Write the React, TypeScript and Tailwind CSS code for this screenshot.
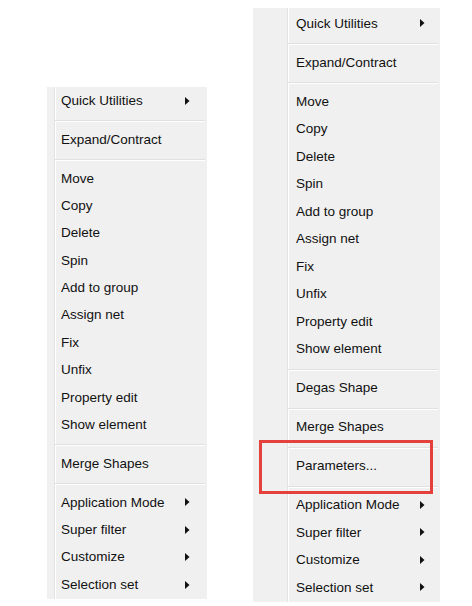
type Entry = { label: string; sub?: boolean } | "sep";

const leftItems: Entry[] = [
  { label: "Quick Utilities", sub: true },
  "sep",
  { label: "Expand/Contract" },
  "sep",
  { label: "Move" },
  { label: "Copy" },
  { label: "Delete" },
  { label: "Spin" },
  { label: "Add to group" },
  { label: "Assign net" },
  { label: "Fix" },
  { label: "Unfix" },
  { label: "Property edit" },
  { label: "Show element" },
  "sep",
  { label: "Merge Shapes" },
  "sep",
  { label: "Application Mode", sub: true },
  { label: "Super filter", sub: true },
  { label: "Customize", sub: true },
  { label: "Selection set", sub: true },
];

const rightItems: Entry[] = [
  { label: "Quick Utilities", sub: true },
  "sep",
  { label: "Expand/Contract" },
  "sep",
  { label: "Move" },
  { label: "Copy" },
  { label: "Delete" },
  { label: "Spin" },
  { label: "Add to group" },
  { label: "Assign net" },
  { label: "Fix" },
  { label: "Unfix" },
  { label: "Property edit" },
  { label: "Show element" },
  "sep",
  { label: "Degas Shape" },
  "sep",
  { label: "Merge Shapes" },
  "sep",
  { label: "Parameters..." },
  "sep",
  { label: "Application Mode", sub: true },
  { label: "Super filter", sub: true },
  { label: "Customize", sub: true },
  { label: "Selection set", sub: true },
];

function Arrow() {
  return (
    <svg width="5" height="8" viewBox="0 0 5 8" className="block">
      <polygon points="0,0 4.5,4 0,8" fill="#111" />
    </svg>
  );
}

type MenuStyle = {
  box: string;
  gutter: string;
  item: string;
  sep: string;
  sepLine: string;
  arrow: string;
};

function Menu({ items, s }: { items: Entry[]; s: MenuStyle }) {
  return (
    <div className={`relative bg-[#f0f0f0] ${s.box}`}>
      <div className={`absolute top-0 bottom-0 w-[2px] border-l border-[#e3e3e3] bg-white ${s.gutter}`} />
      {items.map((it, i) =>
        it === "sep" ? (
          <div key={i} className={`relative ${s.sep}`}>
            <div className={`absolute top-[6px] right-[2px] h-[2px] border-t border-[#e0e0e0] bg-white ${s.sepLine}`} />
          </div>
        ) : (
          <div key={i} className={`relative flex items-center text-[13.5px] text-[#111] ${s.item}`}>
            <span className="leading-none">{it.label}</span>
            {it.sub && (
              <span className={`absolute top-1/2 -translate-y-1/2 ${s.arrow}`}>
                <Arrow />
              </span>
            )}
          </div>
        )
      )}
    </div>
  );
}

export default function App() {
  return (
    <div
      className="relative w-[472px] h-[606px] overflow-hidden bg-white flex items-start pl-[47px] gap-[46px]"
      style={{ fontFamily: '"Liberation Sans", Arial, sans-serif' }}
    >
      <div className="mt-[87px]">
        <Menu
          items={leftItems}
          s={{
            box: "w-[160px] h-[512px] pt-0",
            gutter: "left-[7px]",
            item: "h-[27.4px] pl-[14px]",
            sep: "h-[11.4px]",
            sepLine: "left-[8px]",
            arrow: "right-[17px]",
          }}
        />
      </div>
      <div className="relative mt-[8px]">
        <Menu
          items={rightItems}
          s={{
            box: "w-[187px] h-[594px] pt-[1.5px]",
            gutter: "left-[34px]",
            item: "h-[27.5px] pl-[43px]",
            sep: "h-[11.5px]",
            sepLine: "left-[35px]",
            arrow: "right-[15px]",
          }}
        />
        <div className="absolute left-[6px] top-[432px] w-[174px] h-[54px] border-[3px] border-[#e5413c]" />
      </div>
    </div>
  );
}
